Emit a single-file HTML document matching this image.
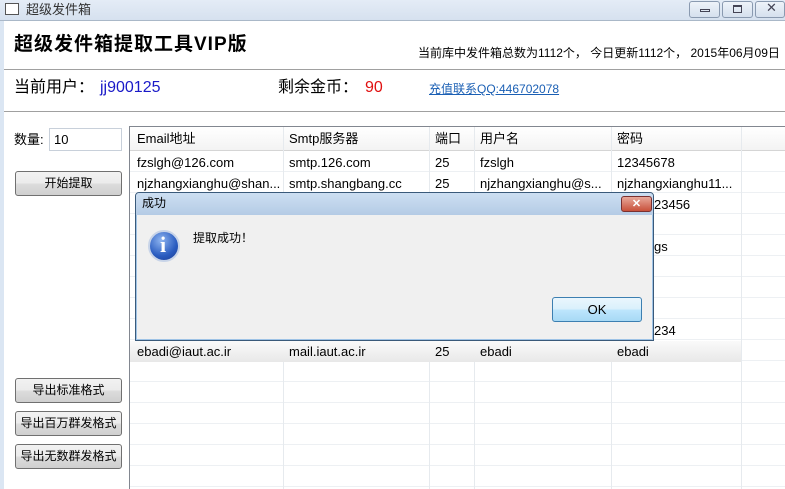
<!DOCTYPE html>
<html><head><meta charset="utf-8"><style>
*{margin:0;padding:0;box-sizing:border-box}
body{width:785px;height:489px;overflow:hidden;position:relative;background:#fff;font-family:"Liberation Sans","Noto Sans CJK SC",sans-serif;font-size:13px;color:#000}
.abs{position:absolute}
.btn{position:absolute;border:1px solid #707070;border-radius:3px;background:linear-gradient(#f2f2f2,#ebebeb 50%,#dddddd 50%,#cfcfcf);text-align:center;font-size:12px;line-height:23px}
.cell{position:absolute;white-space:nowrap;overflow:hidden;font-size:13px;line-height:21px;padding-left:6px}
</style></head><body>
<div class="abs" style="left:0;top:0;width:785px;height:21px;background:linear-gradient(#e4ecf6,#d6e1ef);border-bottom:1px solid #aab8c8"></div>
<div class="abs" style="left:5px;top:3px;width:14px;height:12px;border:1px solid #555;background:#fff"></div>
<div class="abs" style="left:26px;top:0px;font-size:13px;line-height:20px;color:#333">超级发件箱</div>
<div class="abs" style="left:689px;top:1px;width:31px;height:17px;border:1px solid #8a9ab0;border-radius:3px;background:linear-gradient(#eef3f9,#d5e0ee)"></div>
<div class="abs" style="left:722px;top:1px;width:31px;height:17px;border:1px solid #8a9ab0;border-radius:3px;background:linear-gradient(#eef3f9,#d5e0ee)"></div>
<div class="abs" style="left:755px;top:1px;width:30px;height:17px;border:1px solid #8a9ab0;border-radius:3px;background:linear-gradient(#eef3f9,#d5e0ee)"></div>
<div class="abs" style="left:700px;top:9px;width:10px;height:3px;border:1px solid #445"></div>
<div class="abs" style="left:733px;top:5px;width:9px;height:8px;border:1px solid #445;border-top-width:2px"></div>
<div class="abs" style="left:766px;top:0px;font-size:13px;color:#445">✕</div>
<div class="abs" style="left:0;top:21px;width:4px;height:468px;background:#dbe6f3"></div>
<div class="abs" style="left:14px;top:32px;font-size:19px;line-height:26px;font-weight:bold;letter-spacing:1px">超级发件箱提取工具VIP版</div>
<div class="abs" style="left:418px;top:44px;font-size:12px;line-height:18px">当前库中发件箱总数为1112个， 今日更新1112个， 2015年06月09日</div>
<div class="abs" style="left:4px;top:69px;width:781px;height:1px;background:#a0a0a0"></div>
<div class="abs" style="left:14px;top:77px;font-size:16px;line-height:22px;white-space:nowrap">当前用户：<span style="position:absolute;left:86px;color:#1a1ac8">jj900125</span><span style="position:absolute;left:264px">剩余金币：</span><span style="position:absolute;left:351px;color:#e01010">90</span><span style="position:absolute;left:415px;top:1px;font-size:12px;color:#1a5fb4;text-decoration:underline">充值联系QQ:446702078</span></div>
<div class="abs" style="left:4px;top:111px;width:781px;height:1px;background:#a0a0a0"></div>
<div class="abs" style="left:14px;top:130px;font-size:13px;line-height:20px">数量:</div>
<div class="abs" style="left:49px;top:128px;width:73px;height:23px;border:1px solid #c8d0da;padding-left:4px;line-height:21px">10</div>
<div class="btn" style="left:15px;top:171px;width:107px;height:25px">开始提取</div>
<div class="btn" style="left:15px;top:378px;width:107px;height:25px">导出标准格式</div>
<div class="btn" style="left:15px;top:411px;width:107px;height:25px">导出百万群发格式</div>
<div class="btn" style="left:15px;top:444px;width:107px;height:25px">导出无数群发格式</div>
<div class="abs" style="left:129px;top:126px;width:656px;height:363px;border-left:1px solid #828790;border-top:1px solid #828790;background:#fff;
background-image:repeating-linear-gradient(#fff 0 20px,#edf0f3 20px 21px);background-position:0 24px"></div>
<div class="abs" style="left:130px;top:127px;width:655px;height:24px;background:linear-gradient(#fff,#f3f3f3);border-bottom:1px solid #d5d5d5"></div>
<div class="abs" style="left:283px;top:127px;width:1px;height:362px;background:#e6eaee"></div>
<div class="abs" style="left:429px;top:127px;width:1px;height:362px;background:#e6eaee"></div>
<div class="abs" style="left:474px;top:127px;width:1px;height:362px;background:#e6eaee"></div>
<div class="abs" style="left:611px;top:127px;width:1px;height:362px;background:#e6eaee"></div>
<div class="abs" style="left:741px;top:127px;width:1px;height:362px;background:#e6eaee"></div>
<div class="cell" style="left:131px;top:128px;width:150px">Email地址</div>
<div class="cell" style="left:283px;top:128px;width:146px">Smtp服务器</div>
<div class="cell" style="left:429px;top:128px;width:45px">端口</div>
<div class="cell" style="left:474px;top:128px;width:137px">用户名</div>
<div class="cell" style="left:611px;top:128px;width:130px">密码</div>
<div class="cell" style="left:131px;top:152px">fzslgh@126.com</div>
<div class="cell" style="left:283px;top:152px">smtp.126.com</div>
<div class="cell" style="left:429px;top:152px">25</div>
<div class="cell" style="left:474px;top:152px">fzslgh</div>
<div class="cell" style="left:611px;top:152px">12345678</div>
<div class="cell" style="left:131px;top:173px;width:152px">njzhangxianghu@shan...</div>
<div class="cell" style="left:283px;top:173px;width:146px">smtp.shangbang.cc</div>
<div class="cell" style="left:429px;top:173px">25</div>
<div class="cell" style="left:474px;top:173px;width:137px">njzhangxianghu@s...</div>
<div class="cell" style="left:611px;top:173px;width:130px">njzhangxianghu11...</div>
<div class="cell" style="left:648px;top:194px">23456</div>
<div class="cell" style="left:648px;top:236px">gs</div>
<div class="cell" style="left:648px;top:320px">234</div>
<div class="abs" style="left:130px;top:341px;width:611px;height:21px;background:linear-gradient(#fafafa,#e8e8e8)"></div>
<div class="cell" style="left:131px;top:341px">ebadi@iaut.ac.ir</div>
<div class="cell" style="left:283px;top:341px">mail.iaut.ac.ir</div>
<div class="cell" style="left:429px;top:341px">25</div>
<div class="cell" style="left:474px;top:341px">ebadi</div>
<div class="cell" style="left:611px;top:341px">ebadi</div>
<!-- dialog -->
<div class="abs" style="left:135px;top:192px;width:519px;height:149px;border:1px solid #3a5a7a;border-radius:4px 4px 0 0;background:#f0f0f0;box-shadow:0 0 0 1px #9ec3e6 inset"></div>
<div class="abs" style="left:136px;top:193px;width:517px;height:22px;background:linear-gradient(#cddff2,#b4cbe5);border-radius:3px 3px 0 0"></div>
<div class="abs" style="left:142px;top:194px;font-size:12px;line-height:18px">成功</div>
<div class="abs" style="left:621px;top:196px;width:31px;height:16px;border:1px solid #7a3030;border-radius:3px;background:linear-gradient(#e8a89a,#c8503a);color:#fff;text-align:center;font-size:11px;line-height:14px;font-weight:bold">✕</div>
<div class="abs" style="left:148px;top:230px;width:32px;height:32px;border-radius:50%;background:radial-gradient(circle at 40% 30%,#8fb5f0,#2a5cc0 60%,#1a3a90);border:2px solid #c8d4e8"></div>
<div class="abs" style="left:160px;top:232px;color:#fff;font-size:22px;font-weight:bold;font-family:'Liberation Serif',serif">i</div>
<div class="abs" style="left:193px;top:229px;font-size:12px;line-height:18px">提取成功！</div>
<div class="abs" style="left:552px;top:297px;width:90px;height:25px;border:1px solid #3c7fb1;border-radius:3px;background:linear-gradient(#eaf6fd,#d9f0fc 50%,#bee6fd 50%,#a7d9f5);text-align:center;line-height:23px;font-size:13px">OK</div>
</body></html>
